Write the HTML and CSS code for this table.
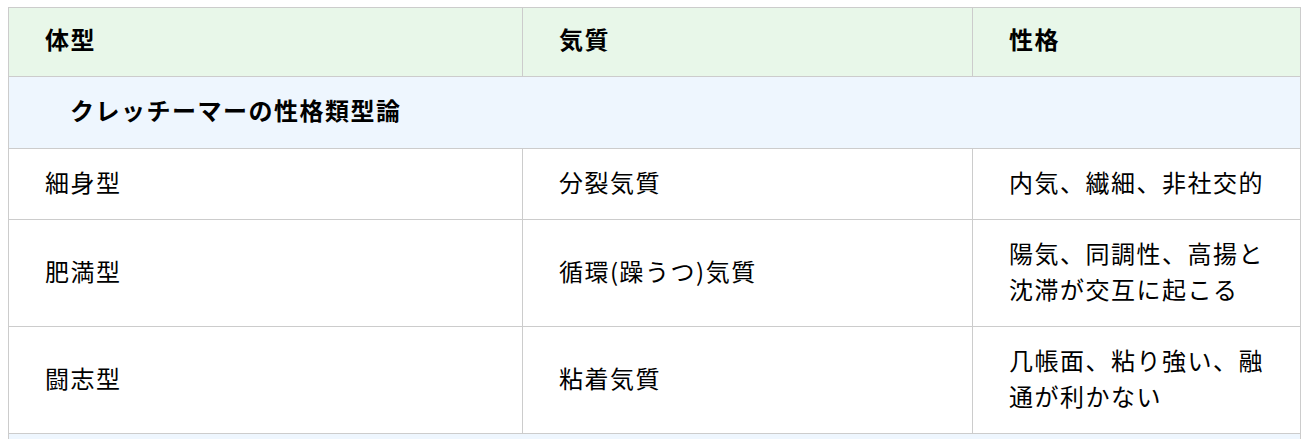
FILE: index.html
```html
<!DOCTYPE html>
<html lang="ja">
<head>
<meta charset="utf-8">
<title>クレッチーマーの性格類型論</title>
<link rel="stylesheet" href="styles.css">
</head>
<body>
<table class="types">
  <colgroup>
    <col class="c1"><col class="c2"><col class="c3">
  </colgroup>
  <thead>
    <tr class="head">
      <th>体型</th>
      <th>気質</th>
      <th>性格</th>
    </tr>
  </thead>
  <tbody>
    <tr class="section">
      <th colspan="3">クレッチーマーの性格類型論</th>
    </tr>
    <tr>
      <td>細身型</td>
      <td>分裂気質</td>
      <td>内気、繊細、非社交的</td>
    </tr>
    <tr>
      <td>肥満型</td>
      <td>循環(躁うつ)気質</td>
      <td>陽気、同調性、高揚と沈滞が交互に起こる</td>
    </tr>
    <tr>
      <td>闘志型</td>
      <td>粘着気質</td>
      <td>几帳面、粘り強い、融通が利かない</td>
    </tr>
    <tr class="section">
      <th colspan="3">&nbsp;</th>
    </tr>
  </tbody>
</table>
</body>
</html>
```

FILE: styles.css
```css
html, body {
  margin: 0;
  padding: 0;
  background: #ffffff;
}

body {
  padding: 7px 7px 0 8px;
  font-family: "Noto Sans CJK JP", "Noto Sans", sans-serif;
  color: #000000;
}

.types {
  width: 1292px;
  border-collapse: collapse;
  table-layout: fixed;
  font-size: 24px;
  line-height: 36px;
  letter-spacing: 1.5px;
}

.c1 { width: 514px; }
.c2 { width: 450px; }
.c3 { width: 328px; }

.types th,
.types td {
  border: 1px solid #cccccc;
  text-align: left;
  vertical-align: middle;
  padding: 15px 28px 19px 36px;
}

.types tr.tall td {
  padding-bottom: 20px;
}

.types td {
  font-weight: 400;
}

.head th {
  background: #e8f7e9;
  font-weight: 700;
  padding-top: 13px;
  padding-bottom: 19px;
}

.section th {
  background: #eef6fe;
  font-weight: 700;
  padding: 15px 36px 20px 61px;
}
```
